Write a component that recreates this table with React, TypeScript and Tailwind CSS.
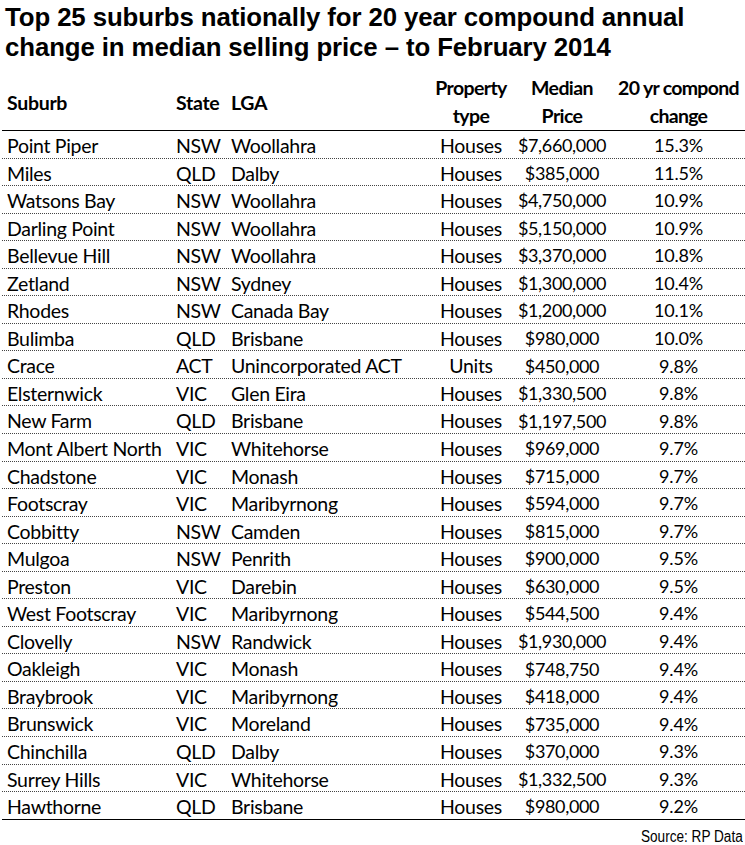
import React from "react";

const rows: [string, string, string, string, string, string][] = [
  ["Point Piper", "NSW", "Woollahra", "Houses", "$7,660,000", "15.3%"],
  ["Miles", "QLD", "Dalby", "Houses", "$385,000", "11.5%"],
  ["Watsons Bay", "NSW", "Woollahra", "Houses", "$4,750,000", "10.9%"],
  ["Darling Point", "NSW", "Woollahra", "Houses", "$5,150,000", "10.9%"],
  ["Bellevue Hill", "NSW", "Woollahra", "Houses", "$3,370,000", "10.8%"],
  ["Zetland", "NSW", "Sydney", "Houses", "$1,300,000", "10.4%"],
  ["Rhodes", "NSW", "Canada Bay", "Houses", "$1,200,000", "10.1%"],
  ["Bulimba", "QLD", "Brisbane", "Houses", "$980,000", "10.0%"],
  ["Crace", "ACT", "Unincorporated ACT", "Units", "$450,000", "9.8%"],
  ["Elsternwick", "VIC", "Glen Eira", "Houses", "$1,330,500", "9.8%"],
  ["New Farm", "QLD", "Brisbane", "Houses", "$1,197,500", "9.8%"],
  ["Mont Albert North", "VIC", "Whitehorse", "Houses", "$969,000", "9.7%"],
  ["Chadstone", "VIC", "Monash", "Houses", "$715,000", "9.7%"],
  ["Footscray", "VIC", "Maribyrnong", "Houses", "$594,000", "9.7%"],
  ["Cobbitty", "NSW", "Camden", "Houses", "$815,000", "9.7%"],
  ["Mulgoa", "NSW", "Penrith", "Houses", "$900,000", "9.5%"],
  ["Preston", "VIC", "Darebin", "Houses", "$630,000", "9.5%"],
  ["West Footscray", "VIC", "Maribyrnong", "Houses", "$544,500", "9.4%"],
  ["Clovelly", "NSW", "Randwick", "Houses", "$1,930,000", "9.4%"],
  ["Oakleigh", "VIC", "Monash", "Houses", "$748,750", "9.4%"],
  ["Braybrook", "VIC", "Maribyrnong", "Houses", "$418,000", "9.4%"],
  ["Brunswick", "VIC", "Moreland", "Houses", "$735,000", "9.4%"],
  ["Chinchilla", "QLD", "Dalby", "Houses", "$370,000", "9.3%"],
  ["Surrey Hills", "VIC", "Whitehorse", "Houses", "$1,332,500", "9.3%"],
  ["Hawthorne", "QLD", "Brisbane", "Houses", "$980,000", "9.2%"],
];

const grid = "grid grid-cols-[168px_56px_204px_82px_100px_133px]";

export default function App() {
  return (
    <div className="w-[745px] h-[845px] bg-white text-black overflow-hidden">
      <h1 className="pl-[5px] pt-[2px] font-['Liberation_Sans',Arial,sans-serif] font-bold text-[25.8px] leading-[30px] tracking-[-0.1px]">
        Top 25 suburbs nationally for 20 year compound annual
        <br />
        change in median selling price – to February 2014
      </h1>
      <div className="ml-[2px] mt-[12px] w-[743px] font-['Lato','Open_Sans',sans-serif] text-[19.5px] tracking-[-0.3px]">
        <div className={`${grid} h-[57px] border-b-[1.5px] border-black font-bold leading-[28px]`}>
          <div className="pl-[5px] self-center pt-[2px]">Suburb</div>
          <div className="pl-[6px] self-center pt-[2px]">State</div>
          <div className="pl-[5px] self-center pt-[2px]">LGA</div>
          <div className="text-center whitespace-nowrap tracking-[-0.6px]">Property<br />type</div>
          <div className="text-center whitespace-nowrap tracking-[-0.6px]">Median<br />Price</div>
          <div className="text-center whitespace-nowrap tracking-[-0.7px]">20 yr compond<br />change</div>
        </div>
        {rows.map((r, i) => (
          <div
            key={i}
            className={`${grid} h-[27.56px] items-center whitespace-nowrap ${
              i === rows.length - 1 ? "border-b-[1.5px] border-solid border-black" : "border-b border-dotted border-[#444]"
            }`}
          >
            <div className="pl-[5px]">{r[0]}</div>
            <div className="pl-[6px]">{r[1]}</div>
            <div className="pl-[5px]">{r[2]}</div>
            <div className="text-center">{r[3]}</div>
            <div className="text-center text-[18px] tracking-[-0.35px]">{r[4]}</div>
            <div className="text-center text-[18px] tracking-[-0.2px]">{r[5]}</div>
          </div>
        ))}
      </div>
      <div className="mt-[4px] pr-[2px] text-right">
        <span className="inline-block origin-right scale-x-[0.85] font-['Liberation_Sans',Arial,sans-serif] text-[16px]">
          Source: RP Data
        </span>
      </div>
    </div>
  );
}
